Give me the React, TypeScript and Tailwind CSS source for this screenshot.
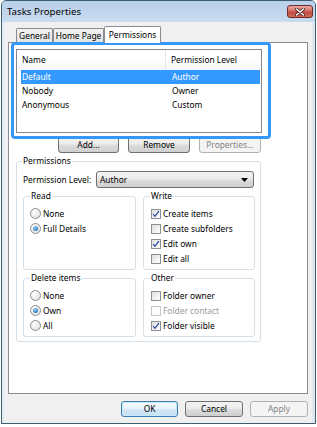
import type { ReactNode } from 'react'

const btnFace = 'bg-[linear-gradient(#f2f2f2_0%,#ebebeb_48%,#dddddd_52%,#cfcfcf_100%)]'

const Btn = ({ children, className = '', kind = 'normal' }: { children: ReactNode; className?: string; kind?: 'normal' | 'default' | 'disabled' }) => {
  const look =
    kind === 'disabled'
      ? 'border-[#adb2b5] bg-[#f4f4f4] text-[#838383]'
      : kind === 'default'
        ? 'border-[#3c7fb1] bg-[linear-gradient(#f4fafe_0%,#e6f2fb_48%,#d4e8f6_52%,#c6e0f2_100%)] text-black shadow-[inset_0_0_0_1px_#c6eafb]'
        : `border-[#707070] ${btnFace} text-black`
  return (
    <div className={`flex items-center justify-center rounded-[3px] border ${look} ${className}`}>{children}</div>
  )
}

const Radio = ({ label, checked }: { label: string; checked?: boolean }) => (
  <div className="flex h-[15px] items-center pl-[6px]">
    <span className="flex h-[11px] w-[11px] items-center justify-center rounded-full border border-[#8e8f8f] bg-[radial-gradient(circle_at_35%_30%,#ffffff,#dcdcdc)]">
      {checked && (
        <span className="h-[5px] w-[5px] rounded-full bg-[radial-gradient(circle_at_40%_35%,#8fd0ff,#0d5aa7)]" />
      )}
    </span>
    <span className="ml-[2px]">{label}</span>
  </div>
)

const Check = ({ label, checked, disabled }: { label: string; checked?: boolean; disabled?: boolean }) => (
  <div className={`flex h-[15px] items-center pl-[7px] ${disabled ? 'text-[#9a9a9a]' : ''}`}>
    <span
      className={`flex h-[10px] w-[10px] items-center justify-center border ${
        disabled ? 'border-[#c6c6c6] bg-[#fbfbfb]' : 'border-[#8e8f8f] bg-[linear-gradient(135deg,#dedede,#ffffff)]'
      }`}
    >
      {checked && (
        <svg width="8" height="8" viewBox="0 0 8 8">
          <path d="M1.2 4.2 L3 6.3 L6.9 1.2" fill="none" stroke="#2a47a3" strokeWidth="1.3" />
        </svg>
      )}
    </span>
    <span className="ml-[2px]">{label}</span>
  </div>
)

const Group = ({ title, className = '', children }: { title: string; className?: string; children: ReactNode }) => (
  <fieldset className={`rounded-[3px] border border-[#d5dfe5] pb-[3px] ${className}`}>
    <legend className="ml-[6px] px-[1px] leading-[12px]">{title}</legend>
    <div className="pt-[4px]">{children}</div>
  </fieldset>
)

const rows = [
  { name: 'Default', level: 'Author', selected: true },
  { name: 'Nobody', level: 'Owner' },
  { name: 'Anonymous', level: 'Custom' },
]

export default function App() {
  return (
    <div className="h-[427px] w-[317px] bg-white font-['Noto_Sans',sans-serif] text-[8.4px] leading-[12px] text-black">
      <div className="ml-[1px] h-[424px] w-[315px] overflow-hidden rounded-t-[5px] border border-[#3b5e73] bg-[#c9dcf1]">
        {/* title bar */}
        <div className="flex h-[21px] bg-[linear-gradient(#b9d0ea,#c8dbf1)]">
          <span className="ml-[5px] pt-[5px] text-[9.7px] text-black">Tasks Properties</span>
          <div className="ml-auto mr-[2px] mt-[4px] flex h-[13px] w-[26px] items-center justify-center rounded-[3px] border border-[#6d2a2a] bg-[linear-gradient(#e8a99c_0%,#d2716a_45%,#c04a3f_55%,#d26a56_100%)]">
            <svg width="10" height="8" viewBox="0 0 10 8">
              <path d="M1.5 1 L8.5 7 M8.5 1 L1.5 7" stroke="#4a1d1d" strokeWidth="3" strokeLinecap="round" />
              <path d="M1.5 1 L8.5 7 M8.5 1 L1.5 7" stroke="#ffffff" strokeWidth="1.6" strokeLinecap="round" />
            </svg>
          </div>
        </div>

        {/* frame + client */}
        <div className="flex h-[401px]">
          <div className="w-[2px] bg-[linear-gradient(90deg,#e8eef5,#dfe7f0)]" />
          <div className="flex w-[308px] flex-col bg-[#f0f0f0] pl-[4px] pt-[4px]">
            {/* tabs */}
            <div className="flex h-[16px] items-end pl-[8px]">
              <div className="flex h-[14px] w-[37px] items-center justify-center rounded-t-[2px] border border-b-0 border-[#898c95] bg-[linear-gradient(#f3f3f3,#e3e3e3)]">
                General
              </div>
              <div className="flex h-[14px] w-[51px] items-center justify-center rounded-t-[2px] border border-b-0 border-[#898c95] bg-[linear-gradient(#f3f3f3,#e3e3e3)]">
                Home Page
              </div>
              <div className="relative z-10 -mb-[1px] flex h-[17px] w-[57px] items-center justify-center rounded-t-[2px] border border-b-0 border-[#898c95] bg-white pb-[1px]">
                Permissions
              </div>
            </div>

            {/* tab page */}
            <div className="relative h-[352px] w-[300px] border border-[#898c95] bg-white">
              <div className="ml-[7px] mt-[6px] h-[84px] w-[246px] border border-[#828790] bg-white">
                <div className="flex h-[20px] bg-[linear-gradient(#ffffff_0%,#ffffff_50%,#f4f5f7_100%)]">
                  <div className="flex w-[149px] items-center border-r border-[#e3e5e8] pl-[5px]">Name</div>
                  <div className="flex items-center pl-[5px]">Permission Level</div>
                </div>
                {rows.map((r) => (
                  <div
                    key={r.name}
                    className={`ml-[4px] mr-[1px] flex h-[14px] items-center ${r.selected ? 'bg-[#3399ff] text-white' : ''}`}
                  >
                    <span className="w-[150px] pl-[1px]">{r.name}</span>
                    <span className="pl-[1px]">{r.level}</span>
                  </div>
                ))}
              </div>

              <div className="ml-[49px] mt-[3px] flex h-[17px] gap-[9px]">
                <Btn className="w-[61px]">Add...</Btn>
                <Btn className="w-[62px]">Remove</Btn>
                <Btn className="w-[62px]" kind="disabled">
                  Properties...
                </Btn>
              </div>

              <fieldset className="ml-[7px] mt-[2px] w-[245px] rounded-[3px] border border-[#d5dfe5] pb-[4px]">
                <legend className="ml-[5px] px-[1px] leading-[12px]">Permissions</legend>
                <div className="mt-[4px] flex h-[17px] items-center pl-[6px]">
                  <span className="w-[73px]">Permission Level:</span>
                  <div className={`flex h-[17px] w-[158px] items-center rounded-[3px] border border-[#707070] pl-[3px] pr-[5px] ${btnFace}`}>
                    <span>Author</span>
                    <svg className="ml-auto" width="7" height="4" viewBox="0 0 7 4">
                      <path d="M0 0 H7 L3.5 4 Z" fill="#000" />
                    </svg>
                  </div>
                </div>

                <div className="mt-[2px] flex gap-[7px] pl-[6px]">
                  <Group title="Read" className="w-[113px]">
                    <Radio label="None" />
                    <Radio label="Full Details" checked />
                  </Group>
                  <Group title="Write" className="w-[112px]">
                    <Check label="Create items" checked />
                    <Check label="Create subfolders" />
                    <Check label="Edit own" checked />
                    <Check label="Edit all" />
                  </Group>
                </div>

                <div className="mt-[2px] flex gap-[7px] pl-[6px]">
                  <Group title="Delete items" className="w-[113px]">
                    <Radio label="None" />
                    <Radio label="Own" checked />
                    <Radio label="All" />
                  </Group>
                  <Group title="Other" className="w-[112px]">
                    <Check label="Folder owner" />
                    <Check label="Folder contact" disabled />
                    <Check label="Folder visible" checked />
                  </Group>
                </div>
              </fieldset>

              {/* highlight drawn over the list */}
              <div className="absolute left-[2px] top-[-1px] h-[97px] w-[260px] rounded-[4px] border-[3px] border-[#3797f7]" />
            </div>

            {/* dialog buttons */}
            <div className="mt-[7px] flex h-[16px] justify-end gap-[7px] pr-[4px]">
              <Btn className="w-[57px]" kind="default">
                OK
              </Btn>
              <Btn className="w-[58px]">Cancel</Btn>
              <Btn className="w-[58px]" kind="disabled">
                Apply
              </Btn>
            </div>
          </div>
          <div className="w-[3px] bg-[#dfe7f0]" />
        </div>
      </div>
    </div>
  )
}
